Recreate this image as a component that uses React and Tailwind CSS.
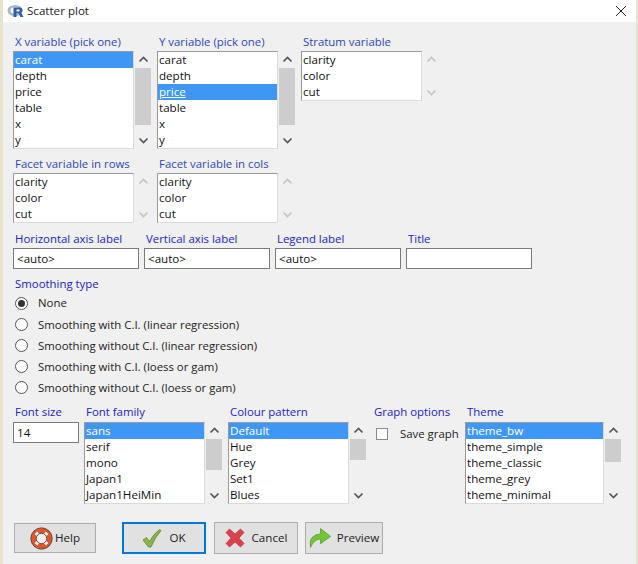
import React from "react";

const Label = ({ children, className = "", color = "text-[#2c46bf]" }) => (
  <div className={`text-[11.4px] leading-[14px] pb-[2px] whitespace-nowrap ${color} ${className}`}>{children}</div>
);

function Chevron({ up, dim }) {
  return (
    <svg width="16" height="17" viewBox="0 0 16 17" className="block">
      <path d={up ? "M4.5 10.5 L8.5 6.5 L12.5 10.5" : "M4.5 6.5 L8.5 10.5 L12.5 6.5"} fill="none" stroke={dim ? "#c4c4c4" : "#555"} strokeWidth="1.7" />
    </svg>
  );
}

function ListBox({ items, selected, underline, width = "w-[121px]", height, thumb, dim }) {
  return (
    <div className="flex">
      <div className={`${width} ${height} overflow-hidden bg-white border border-[#d9d9d9] border-t-[#9a9a9a] border-l-[#9a9a9a]`}>
        {items.map((t) => (
          <div
            key={t}
            className={`h-[16px] leading-[16px] text-[11.6px] pl-[1px] whitespace-nowrap ${t === selected ? "bg-[#3f97f5] text-white" : "text-[#111]"} ${t === selected && underline ? "underline" : ""}`}
          >
            {t}
          </div>
        ))}
      </div>
      <div className="w-[16px] ml-[1px] flex flex-col justify-between">
        <div className="flex flex-col">
          <Chevron up dim={dim} />
          {thumb ? <div className={`${thumb} bg-[#cdcdcd]`} /> : null}
        </div>
        <Chevron dim={dim} />
      </div>
    </div>
  );
}

const vars = ["carat", "depth", "price", "table", "x", "y"];
const facets = ["clarity", "color", "cut"];

function Field({ label, value }) {
  return (
    <div className="flex flex-col w-[126px]">
      <Label className="pl-[2px] mt-[2px]" color="text-[#2020cc]">{label}</Label>
      <div className="h-[21px] bg-white border border-[#7a7a7a] text-[11.6px] leading-[19px] pl-[3px] text-[#111]">{value}</div>
    </div>
  );
}

function Radio({ label, on, className = "h-[21px]" }) {
  return (
    <div className={`${className} flex items-center`}>
      <span className="w-[13px] h-[13px] ml-[2px] rounded-full border border-[#555] bg-white flex items-center justify-center">
        {on ? <span className="w-[7px] h-[7px] rounded-full bg-[#333]" /> : null}
      </span>
      <span className="ml-[10px] text-[11.4px] text-[#222] whitespace-nowrap">{label}</span>
    </div>
  );
}

const Lifebuoy = () => (
  <svg width="23" height="23" viewBox="0 0 22 22">
    <circle cx="11" cy="11" r="7.6" fill="none" stroke="#e2552b" strokeWidth="5" />
    <path d="M5.6 5.6 L8.3 8.3 M16.4 5.6 L13.7 8.3 M5.6 16.4 L8.3 13.7 M16.4 16.4 L13.7 13.7" stroke="#f4f1ec" strokeWidth="3.4" />
    <circle cx="11" cy="11" r="10.2" fill="none" stroke="#5a3a30" strokeWidth="0.9" />
    <circle cx="11" cy="11" r="5" fill="#eeeeee" stroke="#5a3a30" strokeWidth="0.9" />
  </svg>
);
const Check = () => (
  <svg width="20" height="21" viewBox="0 0 20 20">
    <path d="M1 11.5 L4.5 9 L7.5 13 Q11 6 17.5 1 L19 2 Q13 9 9 18.5 L6.5 18.5 Z" fill="#88b54a" stroke="#5c8a2c" strokeWidth="0.8" strokeLinejoin="round" />
  </svg>
);
const Cross = () => (
  <svg width="20" height="20" viewBox="0 0 20 20">
    <path d="M1 4.5 L4.5 1 L10 6 L15.5 1 L19 4.5 L14 10 L19 15.5 L15.5 19 L10 14 L4.5 19 L1 15.5 L6 10 Z" fill="#d8444c" stroke="#b5323a" strokeWidth="0.7" strokeLinejoin="round" />
  </svg>
);
const Arrow = () => (
  <svg width="22" height="22" viewBox="0 0 21 20">
    <path d="M1.5 19 Q-1 7.5 11 6 L11 1 L20.5 8.5 L11 15.5 L11 11 Q5 11 1.5 19 Z" fill="#74c43a" stroke="#4f9a22" strokeWidth="0.7" strokeLinejoin="round" />
  </svg>
);

function Button({ icon, label, className, gap = "gap-[6px]" }) {
  return (
    <div className={`flex items-center justify-center ${gap} bg-[#e1e1e1] text-[11.6px] text-[#222] ${className}`}>
      {icon}
      <span>{label}</span>
    </div>
  );
}

export default function App() {
  return (
    <div
      className="w-[638px] h-[564px] flex flex-col bg-[#f0f0f0] border-l-[3px] border-r-[2px] border-[#e9e3c9] overflow-hidden"
      style={{ fontFamily: '"Open Sans", "Noto Sans", sans-serif' }}
    >
      <div className="h-[22px] bg-white flex items-center justify-between shrink-0">
        <div className="flex items-center ml-[4px]">
          <svg width="18" height="14" viewBox="0 0 18 14">
            <ellipse cx="8" cy="6.5" rx="7.5" ry="5.5" fill="#a9b4c6" />
            <ellipse cx="8" cy="6.5" rx="4.5" ry="3.2" fill="#fff" />
            <path d="M6.5 3.5 H12.5 Q15.5 3.5 15.5 6.5 Q15.5 8 14 8.6 L16.5 13 H13.5 L11.5 9.2 H9.5 V13 H6.5 Z M9.5 5.5 V7.4 H12 Q12.8 7.4 12.8 6.4 Q12.8 5.5 12 5.5 Z" fill="#2b5fa8" fillRule="evenodd" />
          </svg>
          <span className="ml-[2px] text-[11.6px] text-[#222]">Scatter plot</span>
        </div>
        <svg width="12" height="12" viewBox="0 0 12 12" className="mr-[9px]">
          <path d="M1 1 L11 11 M11 1 L1 11" stroke="#222" strokeWidth="1" />
        </svg>
      </div>

      <div className="flex flex-col pl-[10px]">
        <div className="flex mt-[13px]">
          <div className="w-[144px]">
            <Label className="pl-[2px]">X variable (pick one)</Label>
            <ListBox items={vars} selected="carat" height="h-[98px]" thumb="h-[57px]" />
          </div>
          <div className="w-[144px]">
            <Label className="pl-[2px]">Y variable (pick one)</Label>
            <ListBox items={vars} selected="price" underline height="h-[98px]" thumb="h-[57px]" />
          </div>
          <div className="w-[144px]">
            <Label className="pl-[2px]">Stratum variable</Label>
            <ListBox items={facets} height="h-[50px]" dim />
          </div>
        </div>

        <div className="flex mt-[8px]">
          <div className="w-[144px]">
            <Label className="pl-[2px]">Facet variable in rows</Label>
            <ListBox items={facets} height="h-[50px]" dim />
          </div>
          <div className="w-[144px]">
            <Label className="pl-[2px]">Facet variable in cols</Label>
            <ListBox items={facets} height="h-[50px]" dim />
          </div>
        </div>

        <div className="flex gap-[5px] mt-[7px]">
          <Field label="Horizontal axis label" value="<auto>" />
          <Field label="Vertical axis label" value="<auto>" />
          <Field label="Legend label" value="<auto>" />
          <Field label="Title" value="" />
        </div>

        <Label className="pl-[2px] mt-[8px] mb-[-1px]" color="text-[#2020cc]">Smoothing type</Label>
        <div className="flex flex-col">
          <Radio label="None" on className="h-[22px]" />
          <Radio label="Smoothing with C.I. (linear regression)" />
          <Radio label="Smoothing without C.I. (linear regression)" />
          <Radio label="Smoothing with C.I. (loess or gam)" />
          <Radio label="Smoothing without C.I. (loess or gam)" />
        </div>

        <div className="flex mt-[7px]">
          <div className="w-[71px]">
            <Label className="pl-[2px] mb-[1px]" color="text-[#2020cc]">Font size</Label>
            <div className="w-[66px] h-[21px] bg-white border border-[#7a7a7a] text-[11.6px] leading-[19px] pl-[3px] text-[#111]">14</div>
          </div>
          <div className="w-[144px]">
            <Label className="pl-[2px] mb-[1px]" color="text-[#2020cc]">Font family</Label>
            <ListBox items={["sans", "serif", "mono", "Japan1", "Japan1HeiMin"]} selected="sans" height="h-[82px]" thumb="h-[31px]" />
          </div>
          <div className="w-[146px]">
            <Label className="pl-[2px] mb-[1px]" color="text-[#2020cc]">Colour pattern</Label>
            <ListBox items={["Default", "Hue", "Grey", "Set1", "Blues"]} selected="Default" height="h-[82px]" thumb="h-[21px]" />
          </div>
          <div className="w-[91px]">
            <Label className="mb-[1px]" color="text-[#2020cc]">Graph options</Label>
            <div className="flex items-center h-[24px] pl-[2px]">
              <span className="w-[12px] h-[12px] bg-white border border-[#8a8a8a] shrink-0" />
              <span className="ml-[12px] text-[11.4px] text-[#222] whitespace-nowrap">Save graph</span>
            </div>
          </div>
          <div>
            <Label className="pl-[2px] mb-[1px]" color="text-[#2020cc]">Theme</Label>
            <ListBox items={["theme_bw", "theme_simple", "theme_classic", "theme_grey", "theme_minimal"]} selected="theme_bw" width="w-[139px]" height="h-[82px]" thumb="h-[23px]" />
          </div>
        </div>

        <div className="flex items-center mt-[18px]">
          <Button icon={<Lifebuoy />} label="Help" gap="gap-[2px]" className="w-[82px] h-[30px] ml-[1px] border border-[#adadad]" />
          <Button icon={<Check />} label="OK" gap="gap-[7px]" className="w-[84px] h-[32px] ml-[26px] border-2 border-[#0078d7]" />
          <Button icon={<Cross />} label="Cancel" gap="gap-[7px]" className="w-[84px] h-[32px] ml-[8px] border border-[#adadad]" />
          <Button icon={<Arrow />} label="Preview" className="w-[78px] h-[32px] ml-[7px] border border-[#adadad]" />
        </div>
      </div>
    </div>
  );
}
